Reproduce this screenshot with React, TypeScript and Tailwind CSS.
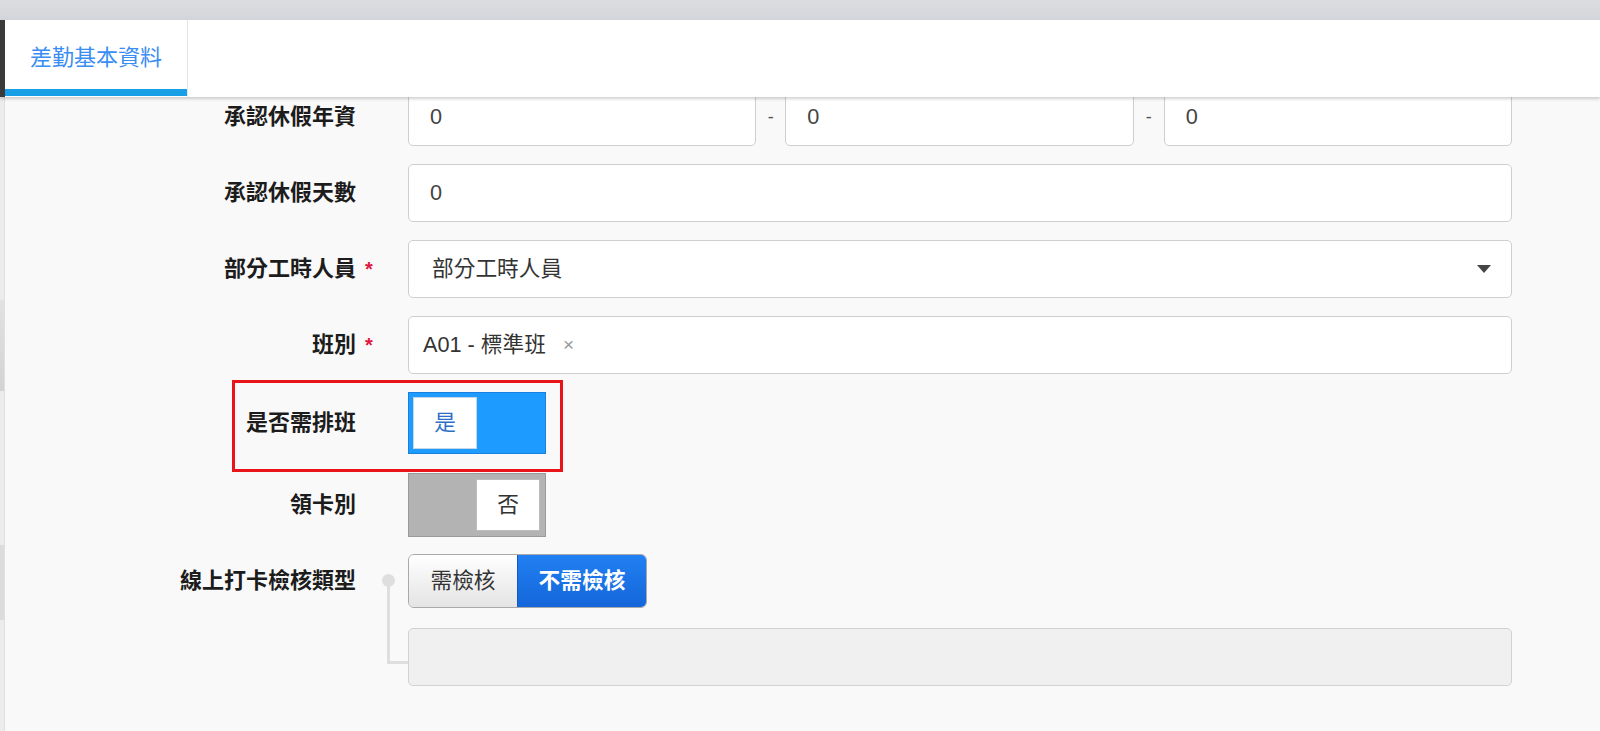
import type { ReactNode } from 'react'

const font = { fontFamily: '"Liberation Sans", "Noto Sans CJK TC", sans-serif' }

function Label({ text, required }: { text: string; required?: boolean }) {
  return (
    <div className="flex items-center justify-end">
      <span className="relative text-[22px] font-semibold text-[#1c1c1c] leading-none">
        {text}
        {required && (
          <span className="absolute left-full top-[1px] ml-[9px] text-[20px] font-bold text-[#e0163f]">*</span>
        )}
      </span>
    </div>
  )
}

function Row({ label, required, children, className = '' }: { label: string; required?: boolean; children: ReactNode; className?: string }) {
  return (
    <div className={`grid grid-cols-[351px_1fr] gap-x-[52px] pr-[88px] ${className}`}>
      <Label text={label} required={required} />
      <div className="flex items-center">{children}</div>
    </div>
  )
}

function TextBox({ value, className = '' }: { value: string; className?: string }) {
  return (
    <div className={`h-full flex items-center rounded-[5px] border border-[#cfcfcf] bg-white pl-[21px] text-[21.7px] text-[#444] ${className}`}>
      {value}
    </div>
  )
}

export default function App() {
  return (
    <div className="min-h-screen flex flex-col bg-[#f9f9f9]" style={font}>
      <div className="h-[20px] bg-gradient-to-b from-[#dcdde1] to-[#d4d5da]" />

      <div className="relative z-10 flex h-[77px] bg-white shadow-[0_2px_3px_rgba(0,0,0,0.18)]">
        <div className="w-[5px] bg-[#3a3a3a]" />
        <div className="relative flex w-[183px] items-center justify-center border-r border-[#e6e6e6] pb-[3px]">
          <span className="text-[22px] text-[#3a8df2]">差勤基本資料</span>
          <div className="absolute bottom-[1px] left-0 right-0 h-[7px] bg-[#17a0e6]" />
        </div>
      </div>

      <div className="flex flex-1">
        <div className="flex w-[5px] flex-col border-r border-[#e0e0e0] bg-[#ececec]">
          <div className="h-[203px]" />
          <div className="h-[91px] bg-gradient-to-b from-[#e2e2e2] to-[#d3d3d3]" />
          <div className="h-[154px]" />
          <div className="h-[75px] bg-[#dcdcdc]" />
        </div>

        <div className="-mt-[9px] flex flex-1 flex-col pb-[40px]">
          <Row label="承認休假年資" className="h-[58px]">
            <div className="flex h-full w-full items-center">
              <TextBox value="0" className="flex-1" />
              <span className="w-[29px] text-center text-[18px] text-[#555]">-</span>
              <TextBox value="0" className="flex-1" />
              <span className="w-[30px] text-center text-[18px] text-[#555]">-</span>
              <TextBox value="0" className="flex-1" />
            </div>
          </Row>

          <Row label="承認休假天數" className="mt-[18px] h-[58px]">
            <TextBox value="0" className="w-full" />
          </Row>

          <Row label="部分工時人員" required className="mt-[18px] h-[58px]">
            <div className="flex h-full w-full items-center justify-between rounded-[5px] border border-[#cfcfcf] bg-white pl-[23px] pr-[20px] text-[21.7px] text-[#333]">
              <span>部分工時人員</span>
              <svg width="14" height="8" viewBox="0 0 14 8">
                <path d="M0 0h14L7 8z" fill="#444" />
              </svg>
            </div>
          </Row>

          <Row label="班別" required className="mt-[18px] h-[58px]">
            <div className="flex h-full w-full items-center rounded-[5px] border border-[#cfcfcf] bg-white pl-[14px] text-[21.7px] text-[#333]">
              <span>A01 - 標準班</span>
              <span className="ml-[17px] text-[19px] text-[#9a9a9a]">×</span>
            </div>
          </Row>

          <div className="relative mt-[18px]">
            <Row label="是否需排班" className="h-[62px]">
              <div className="flex h-full w-[138px] items-center border border-[#1780e0] bg-[#1e9bff] p-[4px]">
                <div className="flex h-[52px] w-[64px] items-center justify-center border border-[#c9d6e6] bg-white text-[21.7px] text-[#2c6fc4]">
                  是
                </div>
              </div>
            </Row>
            <div className="pointer-events-none absolute left-[227px] top-[-12px] h-[92px] w-[331px] border-[3px] border-[#e8141a]" />
          </div>

          <Row label="領卡別" className="mt-[19px] h-[61px]">
            <div className="flex h-full w-[138px] items-center justify-end border border-[#9a9a9a] bg-[#b3b3b3] p-[5px]">
              <div className="flex h-[52px] w-[64px] items-center justify-center border border-[#bdbdbd] bg-white text-[21.7px] text-[#333]">
                否
              </div>
            </div>
          </Row>

          <div className="relative">
            <Row label="線上打卡檢核類型" className="mt-[20px] h-[54px]">
              <div className="flex h-full overflow-hidden rounded-[6px] border border-[#a9a9a9] text-[21.7px]">
                <div className="flex w-[108px] items-center justify-center bg-gradient-to-b from-white to-[#e4e4e4] text-[#333]">
                  需檢核
                </div>
                <div className="flex w-[129px] items-center justify-center border-l border-[#1559c4] bg-gradient-to-b from-[#2280f2] to-[#1466da] font-bold text-white">
                  不需檢核
                </div>
              </div>
            </Row>

            <Row label="" className="mt-[20px] h-[58px]">
              <div className="h-full w-full rounded-[5px] border border-[#d2d2d2] bg-[#f0f0f0]" />
            </Row>

            <div className="pointer-events-none absolute left-[377px] top-[40px] h-[13px] w-[13px] rounded-full bg-[#dedede]" />
            <div className="pointer-events-none absolute left-[382px] top-[46px] h-[84px] w-[3px] bg-[#dedede]" />
            <div className="pointer-events-none absolute left-[382px] top-[127px] h-[3px] w-[21px] bg-[#dedede]" />
          </div>
        </div>
      </div>
    </div>
  )
}
